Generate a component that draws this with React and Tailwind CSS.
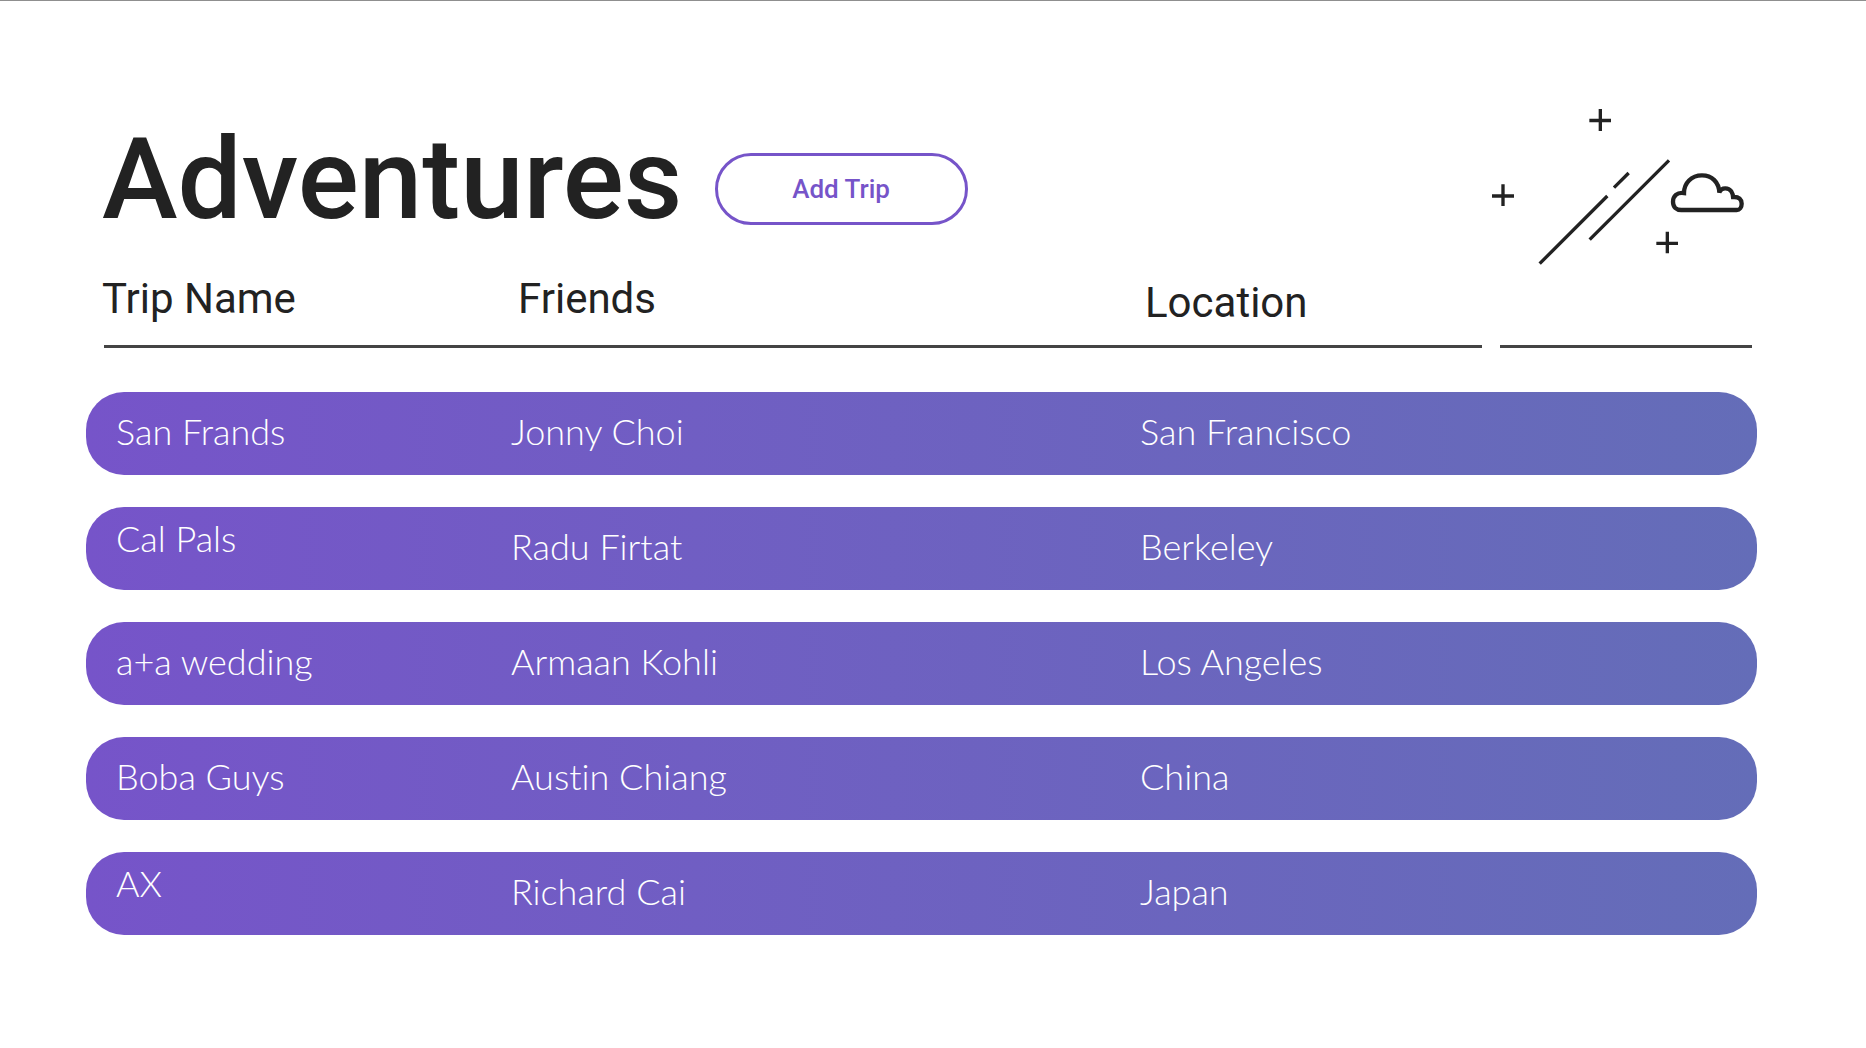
const trips = [
  { name: "San Frands", friends: "Jonny Choi", location: "San Francisco" },
  { name: "Cal Pals", friends: "Radu Firtat", location: "Berkeley", raised: true },
  { name: "a+a wedding", friends: "Armaan Kohli", location: "Los Angeles" },
  { name: "Boba Guys", friends: "Austin Chiang", location: "China" },
  { name: "AX", friends: "Richard Cai", location: "Japan", raised: true },
];

function SkyDrawing() {
  return (
    <svg
      aria-hidden="true"
      viewBox="66 57 756 468"
      className="h-[156px] w-[252px] shrink-0"
      fill="none"
      stroke="#222222"
      strokeWidth="10"
    >
      <path d="M391 57V123M358 91.500H423" />
      <path d="M99 283V348M66 318H132" />
      <path d="M592 425V490M559 460H624" />
      <path d="M209 521L412 318M432 293L476 249M359 449L597 211" />
      <path
        strokeWidth="13"
        d="M634 360H800C809 360 815 352 815 341C815 329 807 320 790 321V328C790 308 781 295 766 295C757 295 751 299 748 308C747 277 726 256 696 256C664 256 642 279 642 309C621 306 609 318 609 335C609 351 619 360 634 360Z"
      />
    </svg>
  );
}

function TripRow({ trip }) {
  return (
    <tr className="grid h-[83px] grid-cols-[395fr_629fr_617fr] items-center rounded-[38px] bg-linear-to-r from-[#7654c9] to-[#646db8] pb-1.5 pl-[30px]">
      <td className={trip.raised ? "pb-4" : ""}>{trip.name}</td>
      <td>{trip.friends}</td>
      <td>{trip.location}</td>
    </tr>
  );
}

export default function App() {
  return (
    <main className="min-h-screen border-t border-[#8f8f8f] bg-white pt-[108px] pr-[109px] pb-12 pl-[86px] font-[Roboto,sans-serif] text-[#222222]">
      <header className="flex items-start justify-between pr-[13px] pl-4">
        <div className="flex items-center gap-8">
          <h1 className="pb-5 text-[114px] leading-[140px] font-medium">Adventures</h1>
          <button
            type="button"
            className="h-[72px] w-[253px] rounded-full border-3 border-[#7654c9] text-[26px] font-medium text-[#7654c9]"
          >
            Add Trip
          </button>
        </div>
        <SkyDrawing />
      </header>

      <table className="block w-full">
        <thead className="block text-left text-[42px] leading-[60px]">
          <tr className="grid h-[76px] grid-cols-[416fr_627fr_612fr] items-start pl-4">
            <th className="font-[450]">Trip Name</th>
            <th className="font-[450]">Friends</th>
            <th className="pt-1 font-[450]">Location</th>
          </tr>
          <tr aria-hidden="true" className="grid grid-cols-[1378fr_252fr] gap-[18px] pr-[5px] pl-[18px]">
            <td className="h-[3px] bg-[#444444]" />
            <td className="h-[3px] bg-[#444444]" />
          </tr>
        </thead>
        <tbody className="mt-11 flex flex-col gap-8 font-[Lato,sans-serif] text-[36px] leading-[48px] font-light text-white [font-variant-ligatures:none]">
          {trips.map((trip) => (
            <TripRow key={trip.name} trip={trip} />
          ))}
        </tbody>
      </table>
    </main>
  );
}
